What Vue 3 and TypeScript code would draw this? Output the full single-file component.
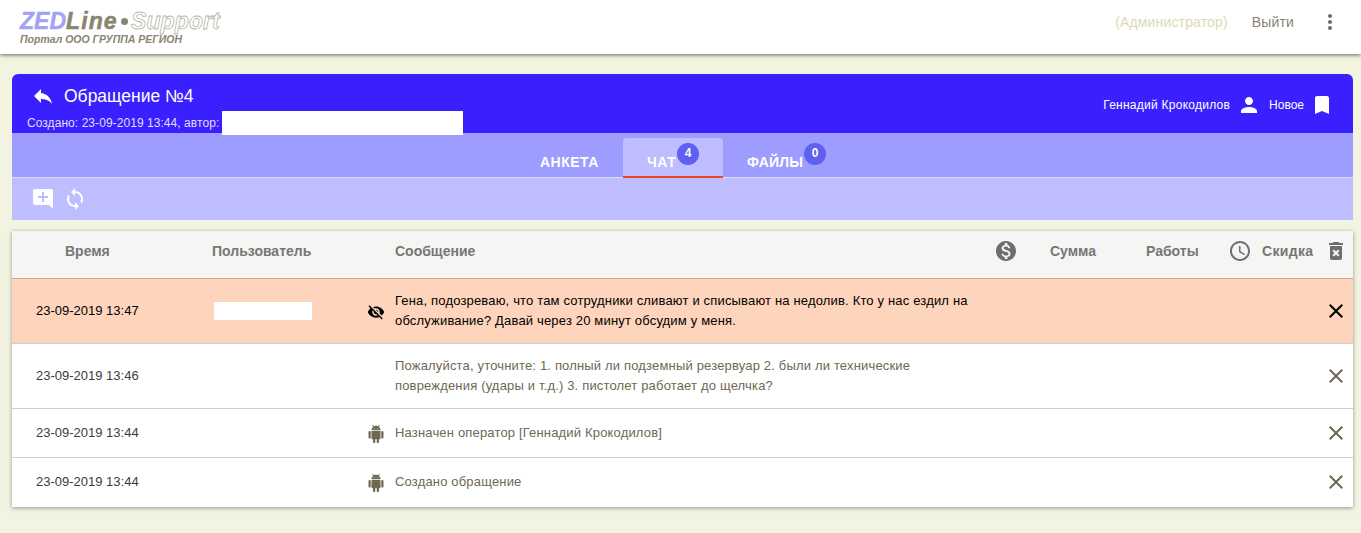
<script setup lang="ts">
interface Row {
  time: string
  lines: string[]
  icon?: 'eye' | 'android'
  mask?: boolean
  hot?: boolean
  cls: string
}
const rows: Row[] = [
  { time: '23-09-2019 13:47', lines: ['Гена, подозреваю, что там сотрудники сливают и списывают на недолив. Кто у нас ездил на', 'обслуживание? Давай через 20 минут обсудим у меня.'], icon: 'eye', mask: true, hot: true, cls: 'r1' },
  { time: '23-09-2019 13:46', lines: ['Пожалуйста, уточните: 1. полный ли подземный резервуар 2. были ли технические', 'повреждения (удары и т.д.) 3. пистолет работает до щелчка?'], cls: 'r2' },
  { time: '23-09-2019 13:44', lines: ['Назначен оператор [Геннадий Крокодилов]'], icon: 'android', cls: 'r3' },
  { time: '23-09-2019 13:44', lines: ['Создано обращение'], icon: 'android', cls: 'r4' },
]
const androidPath = 'M6 18c0 .55.45 1 1 1h1v3.5c0 .83.67 1.5 1.5 1.5s1.5-.67 1.5-1.5V19h2v3.5c0 .83.67 1.5 1.5 1.5s1.5-.67 1.5-1.5V19h1c.55 0 1-.45 1-1V8H6v10zM3.5 8C2.67 8 2 8.67 2 9.5v7c0 .83.67 1.5 1.5 1.5S5 17.33 5 16.5v-7C5 8.67 4.33 8 3.5 8zm17 0c-.83 0-1.5.67-1.5 1.5v7c0 .83.67 1.5 1.5 1.5s1.5-.67 1.5-1.5v-7c0-.83-.67-1.5-1.5-1.5zm-4.97-5.84l1.3-1.3c.2-.2.2-.51 0-.71-.2-.2-.51-.2-.71 0l-1.48 1.48C13.85 1.23 12.95 1 12 1c-.96 0-1.86.23-2.66.63L7.85.15c-.2-.2-.51-.2-.71 0-.2.2-.2.51 0 .71l1.31 1.31C6.97 3.26 6 5.01 6 7h12c0-1.99-.97-3.75-2.47-4.84zM10 5H9V4h1v1zm5 0h-1V4h1v1z'
const eyeOffPath = 'M12 7c2.76 0 5 2.24 5 5 0 .65-.13 1.26-.36 1.83l2.92 2.92c1.51-1.26 2.7-2.89 3.43-4.75-1.73-4.39-6-7.5-11-7.5-1.4 0-2.74.25-3.98.7l2.16 2.16C10.74 7.13 11.35 7 12 7zM2 4.27l2.28 2.28.46.46C3.08 8.3 1.78 10.02 1 12c1.73 4.39 6 7.5 11 7.5 1.55 0 3.03-.3 4.38-.84l.42.42L19.73 22 21 20.73 3.27 3 2 4.27zM7.53 9.8l1.55 1.55c-.05.21-.08.43-.08.65 0 1.66 1.34 3 3 3 .22 0 .44-.03.65-.08l1.55 1.55c-.67.33-1.41.53-2.2.53-2.76 0-5-2.24-5-5 0-.79.2-1.53.53-2.2zm4.31-.78l3.15 3.15.02-.16c0-1.66-1.34-3-3-3l-.17.01z'
</script>

<template>
  <div class="page">
    <header class="topbar">
      <div class="brand">
        <div class="logo">
          <span class="zed">ZED</span><span class="line">Line</span><span class="dot"></span><span class="support">Support</span>
        </div>
        <div class="portal">Портал ООО ГРУППА РЕГИОН</div>
      </div>
      <div class="top-right">
        <span class="role">(Администратор)</span>
        <span class="logout">Выйти</span>
        <svg class="more" viewBox="0 0 24 24" width="24" height="24"><path d="M12 8c1.1 0 2-.9 2-2s-.9-2-2-2-2 .9-2 2 .9 2 2 2zm0 2c-1.1 0-2 .9-2 2s.9 2 2 2 2-.9 2-2-.9-2-2-2zm0 6c-1.1 0-2 .9-2 2s.9 2 2 2 2-.9 2-2-.9-2-2-2z" /></svg>
      </div>
    </header>

    <main class="content">
      <section class="panel">
        <div class="blue">
          <div class="blue-left">
            <div class="title-row">
              <svg class="reply" viewBox="0 0 24 24" width="24" height="24"><path d="M10 9V5l-7 7 7 7v-4.1c5 0 8.5 1.6 11 5.1-1-5-4-10-11-11z" /></svg>
              <span class="title">Обращение №4</span>
            </div>
            <div class="sub">
              <span>Создано: 23-09-2019 13:44, автор:</span>
              <span class="mask-author"></span>
            </div>
          </div>
          <div class="blue-right">
            <span class="person-name">Геннадий Крокодилов</span>
            <svg viewBox="0 0 24 24" width="24" height="24"><path d="M12 12c2.21 0 4-1.79 4-4s-1.79-4-4-4-4 1.79-4 4 1.79 4 4 4zm0 2c-2.67 0-8 1.34-8 4v2h16v-2c0-2.66-5.33-4-8-4z" /></svg>
            <span class="status">Новое</span>
            <svg viewBox="0 0 24 24" width="24" height="24"><path d="M17 3H7c-1.1 0-2 .9-2 2v16l7-3 7 3V5c0-1.1-.9-2-2-2z" /></svg>
          </div>
        </div>

        <nav class="tabs">
          <div class="tab t1">АНКЕТА</div>
          <div class="tab t2 active">ЧАТ<span class="badge">4</span></div>
          <div class="tab t3">ФАЙЛЫ<span class="badge">0</span></div>
        </nav>

        <div class="toolbar">
          <svg viewBox="0 0 24 24" width="24" height="24"><path d="M22 4c0-1.1-.9-2-2-2H4c-1.1 0-2 .9-2 2v12c0 1.1.9 2 2 2h14l4 4V4zm-5 7h-4v4h-2v-4H7V9h4V5h2v4h4v2z" /></svg>
          <svg viewBox="0 0 24 24" width="24" height="24"><path d="M12 4V1L8 5l4 4V6c3.31 0 6 2.69 6 6 0 1.01-.25 1.97-.7 2.8l1.46 1.46C19.54 15.03 20 13.57 20 12c0-4.42-3.58-8-8-8zm0 14c-3.31 0-6-2.69-6-6 0-1.01.25-1.97.7-2.8L5.24 7.74C4.46 8.97 4 10.43 4 12c0 4.42 3.58 8 8 8v3l4-4-4-4v3z" /></svg>
        </div>
      </section>

      <section class="table">
        <div class="head">
          <span class="h-time">Время</span>
          <span class="h-user">Пользователь</span>
          <span class="h-msg">Сообщение</span>
          <svg class="h-dollar" viewBox="0 0 24 24" width="24" height="24"><path d="M12 2C6.48 2 2 6.48 2 12s4.48 10 10 10 10-4.48 10-10S17.52 2 12 2zm1.41 16.09V20h-2.67v-1.93c-1.71-.36-3.16-1.46-3.27-3.4h1.96c.1 1.05.82 1.87 2.65 1.87 1.96 0 2.4-.98 2.4-1.59 0-.83-.44-1.61-2.67-2.14-2.48-.6-4.18-1.62-4.18-3.67 0-1.72 1.39-2.84 3.11-3.21V4h2.67v1.95c1.86.45 2.79 1.86 2.85 3.39H14.3c-.05-1.11-.64-1.87-2.22-1.87-1.5 0-2.4.68-2.4 1.64 0 .84.65 1.39 2.67 1.91s4.18 1.39 4.18 3.91c-.01 1.83-1.38 2.83-3.12 3.16z" /></svg>
          <span class="h-sum">Сумма</span>
          <span class="h-work">Работы</span>
          <svg class="h-clock" viewBox="0 0 24 24" width="24" height="24"><path d="M11.99 2C6.47 2 2 6.48 2 12s4.47 10 9.99 10C17.52 22 22 17.52 22 12S17.52 2 11.99 2zM12 20c-4.42 0-8-3.58-8-8s3.58-8 8-8 8 3.58 8 8-3.58 8-8 8zm.5-13H11v6l5.25 3.15.75-1.23-4.5-2.67z" /></svg>
          <span class="h-disc">Скидка</span>
          <svg class="h-trash" viewBox="0 0 24 24" width="24" height="24"><path d="M6 19c0 1.1.9 2 2 2h8c1.1 0 2-.9 2-2V7H6v12zm2.46-7.12l1.41-1.41L12 12.59l2.12-2.12 1.41 1.41L13.41 14l2.12 2.12-1.41 1.41L12 15.41l-2.12 2.12-1.41-1.41L10.59 14l-2.13-2.12zM15.5 4l-1-1h-5l-1 1H5v2h14V4z" /></svg>
        </div>
        <div v-for="row in rows" :key="row.cls" class="row" :class="[row.cls, { hot: row.hot }]">
          <span class="c-time">{{ row.time }}</span>
          <span class="c-user"><span v-if="row.mask" class="mask-user"></span></span>
          <span class="c-icon">
            <svg v-if="row.icon === 'eye'" viewBox="0 0 24 24" width="18" height="18"><path :d="eyeOffPath" /></svg>
            <svg v-else-if="row.icon === 'android'" viewBox="0 0 24 24" width="18" height="18"><path :d="androidPath" /></svg>
          </span>
          <div class="c-msg"><div v-for="l in row.lines" :key="l">{{ l }}</div></div>
          <svg class="c-close" viewBox="0 0 24 24" width="24" height="24"><path d="M19 6.41L17.59 5 12 10.59 6.41 5 5 6.41 10.59 12 5 17.59 6.41 19 12 13.41 17.59 19 19 17.59 13.41 12z" /></svg>
        </div>
      </section>
    </main>
  </div>
</template>

<style>
html, body { margin: 0; background: #f2f3e1; }
</style>

<style scoped>
.page {
  height: 533px;
  overflow: hidden;
  background: #f2f3e1;
  font-family: "Liberation Sans", Arial, sans-serif;
  color: #6e6853;
}
.topbar {
  height: 54px;
  background: #fff;
  box-shadow: 0 1px 4px rgba(60, 58, 40, 0.75);
  display: flex;
  justify-content: space-between;
  align-items: center;
  position: relative;
  padding: 0 19px 0 20px;
}
.brand { margin-top: 1px; }
.logo {
  display: flex;
  align-items: center;
  font-style: italic;
  font-weight: 700;
  font-size: 23px;
  line-height: 22px;
  height: 22px;
}
.zed { color: #a3a3f5; -webkit-text-stroke: 0.4px #a3a3f5; width: 46px; }
.line { color: #8a8470; -webkit-text-stroke: 0.5px #8a8470; letter-spacing: 1.1px; width: 55px; }
.dot { width: 7px; height: 7px; border-radius: 50%; background: #8a8470; margin: 2px 3px 0 0; }
.support {
  color: #fff;
  -webkit-text-stroke: 0.8px #b9b6a3;
  letter-spacing: 0.1px;
}
.portal {
  font-size: 10.5px;
  line-height: 14px;
  font-weight: 700;
  font-style: italic;
  color: #8a8470;
}
.top-right { display: flex; align-items: center; font-size: 14px; letter-spacing: 0.15px; padding-bottom: 10px; }
.role { color: #ddd9b3; }
.logout { color: #8a8470; margin-left: 24px; }
.more { fill: #6b6b6b; margin-left: 24px; }

.content { padding: 20px 8px 0 12px; }
.panel { border-radius: 6px 6px 0 0; overflow: hidden; }
.blue {
  height: 59px;
  background: #3a20ff;
  color: #fff;
  display: flex;
  justify-content: space-between;
}
.blue-left { padding-left: 15px; }
.title-row { display: flex; align-items: center; height: 22px; margin-top: 11px; margin-left: 4px; }
.reply { fill: #fff; }
.title { font-size: 17.5px; margin-left: 9px; }
.sub { display: flex; align-items: flex-start; font-size: 12px; letter-spacing: 0.06px; color: #e2dffb; margin-top: 7px; line-height: 18px; }
.mask-author { width: 241px; height: 24px; background: #fff; margin: -3px 0 0 3px; position: relative; z-index: 1; }
.blue-right {
  display: flex;
  align-items: center;
  font-size: 12px;
  letter-spacing: 0.25px;
  fill: #fff;
  padding: 2px 19px 0 0;
}
.blue-right svg:first-of-type { margin: 0 8px 0 7px; }
.blue-right svg:last-of-type { margin-left: 6px; }
.status { letter-spacing: 0; }

.tabs {
  height: 45px;
  box-sizing: border-box;
  background: #9d9dff;
  border-bottom: 1px solid #dcdcf2;
  display: flex;
  justify-content: center;
}
.tab {
  position: relative;
  box-sizing: border-box;
  height: 40px;
  margin-top: 5px;
  padding: 16px 0 0 24px;
  font-size: 14px;
  font-weight: 700;
  letter-spacing: 0.5px;
  line-height: 16px;
  color: #fff;
}
.t1 { width: 107px; }
.t2 { width: 100px; }
.t3 { width: 126px; letter-spacing: 0.15px; }
.tab.active {
  background: #bdbdff;
  border-radius: 4px 4px 0 0;
  border-bottom: 2px solid #f4431c;
}
.badge {
  position: absolute;
  width: 22px;
  height: 22px;
  border-radius: 50%;
  background: #5f5ff0;
  font-size: 12px;
  letter-spacing: 0;
  line-height: 20px;
  text-align: center;
  top: 5px;
  left: 54px;
}
.t3 .badge { left: 81px; }
.toolbar {
  height: 42px;
  background: #bdbdff;
  display: flex;
  align-items: center;
  gap: 8px;
  padding-left: 19px;
  fill: #fff;
}

.table {
  margin-top: 11px;
  background: #fff;
  box-shadow: 0 1px 4px rgba(0, 0, 0, 0.4);
}
.head {
  height: 48px;
  box-sizing: border-box;
  padding-bottom: 7px;
  background: #f5f5f3;
  border-bottom: 1px solid #c9a99a;
  display: flex;
  align-items: center;
  position: relative;
  font-size: 14px;
  font-weight: 700;
  color: #767676;
  fill: #6e6e6e;
}
.h-time { margin-left: 53px; width: 147px; }
.h-user { width: 183px; }
.h-msg { width: 599px; }
.h-dollar { flex: none; }
.h-sum { margin-left: 32px; width: 96px; }
.h-work { width: 82px; }
.h-clock { flex: none; }
.h-disc { margin-left: 10px; width: 62px; letter-spacing: 0.35px; }
.h-trash { flex: none; }
.row {
  display: flex;
  align-items: center;
  box-sizing: border-box;
  border-bottom: 1px solid #cfcfcf;
  font-size: 13px;
  line-height: 20px;
  color: #6e6853;
}
.row:last-child { border-bottom: none; }
.r1 { height: 65px; }
.r2 { height: 65px; }
.r3 { height: 49px; }
.r4 { height: 49px; padding-bottom: 1px; }
.hot { background: #ffd4bc; color: #000; fill: #000; }
.c-time { margin-left: 24px; width: 176px; flex: none; color: #3c3c3c; }
.hot .c-time { color: #000; }
.c-user { width: 147px; flex: none; }
.mask-user { display: block; width: 98px; height: 18px; margin: 0 0 0 2px; background: #fff; }
.c-icon { width: 36px; flex: none; display: flex; padding: 2px 0 0 8px; box-sizing: border-box; }
.c-icon svg { fill: #6e6853; }
.hot .c-icon svg { fill: #000; }
.c-msg { flex: 1; letter-spacing: 0.17px; }
.c-close { fill: #6e6853; margin-right: 5px; flex: none; }
.hot .c-close { fill: #000; }
</style>
